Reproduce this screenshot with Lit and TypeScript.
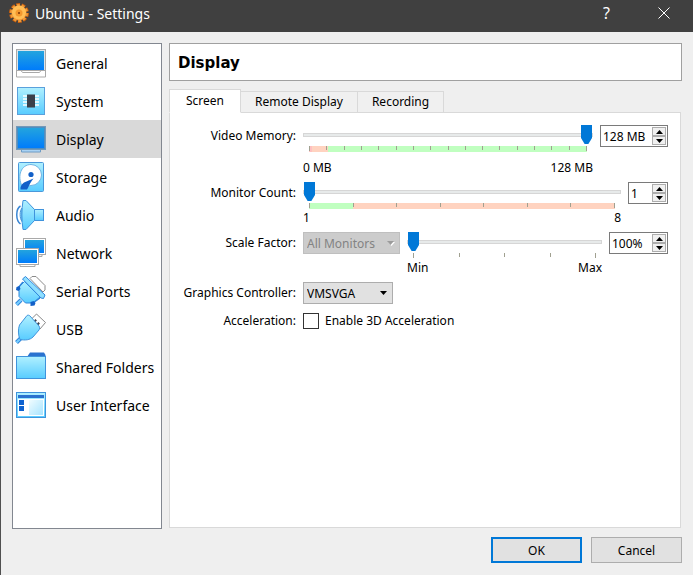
import { LitElement, html, css, svg, nothing } from "lit";
import { customElement, property, state } from "lit/decorators.js";
import { classMap } from "lit/directives/class-map.js";
import { styleMap } from "lit/directives/style-map.js";

const defs = svg`
  <defs>
    <linearGradient id="screen" x1="0" y1="0" x2="0" y2="1">
      <stop offset="0" stop-color="#23a4de" /><stop offset="1" stop-color="#007cfb" />
    </linearGradient>
    <linearGradient id="sky" x1="0" y1="0" x2="0" y2="1">
      <stop offset="0" stop-color="#b0f0ff" /><stop offset="1" stop-color="#58ccff" />
    </linearGradient>
    <linearGradient id="pale" x1="0" y1="0" x2="1" y2="1">
      <stop offset="0" stop-color="#f0fcff" /><stop offset="1" stop-color="#a8e4ff" />
    </linearGradient>
  </defs>`;

const icons = {
  general: svg`
    <path d="M1.500 23.500H6l1.500 2h17l1.500-2h4.500v6.500h-29z" fill="#fff" stroke="#a9a9a9" />
    <rect x="1.500" y="2.500" width="29" height="21" fill="#dce4ea" stroke="#a9a9a9" />
    <rect x="3" y="4" width="26" height="19" fill="url(#screen)" />`,
  system: svg`
    <rect x="2.500" y="2.500" width="27" height="27" fill="url(#sky)" stroke="#5aa0dc" />
    <path d="M8 11h16M8 14h16M8 17h16M8 20h16" stroke="#fff" stroke-width="1.500" />
    <rect x="12" y="9.500" width="8" height="13" fill="#3a3f4b" />`,
  display: svg`
    <path d="M6.500 26v3h19v-3z" fill="#a9d2f3" stroke="#6d9cc6" />
    <rect x="1.500" y="3.500" width="29" height="23" fill="#4f8dc0" stroke="#7299b9" />
    <rect x="3" y="5" width="26" height="20" fill="url(#screen)" />`,
  storage: svg`
    <rect x="3.500" y="1.500" width="25" height="29" rx="1" fill="url(#sky)" stroke="#4a98da" />
    <path d="M7 25C2 15 6 3.500 16 3.500A10.500 10.500 0 0 1 16 24.500C14 24.500 11 26 9 27z" fill="#fff" stroke="#6fb4e4" />
    <path d="M18.500 17.500L9 21.500C6.500 23 5 26 5.500 28.500H12C14 26 14 23 18.500 17.500z" fill="#1260c8" />
    <circle cx="16" cy="13.500" r="2.600" fill="#1260c8" />`,
  audio: svg`
    <path d="M7 9C4.500 12 4.500 19 7 22.500z" fill="#8edbff" stroke="#4a98da" />
    <path d="M5.500 7C.500 10 .500 21 5.500 25" fill="none" stroke="#3a86d4" stroke-width="1.500" />
    <rect x="19.500" y="10.500" width="9" height="11" fill="url(#sky)" stroke="#3f93dc" />
    <path d="M8 1.500h3l8.500 9v11l-8.500 9H8C6.500 21 6.500 11 8 1.500z" fill="url(#sky)" stroke="#3f93dc" />`,
  network: svg`
    <path d="M12 17v2.500h15V17z" fill="#f4f4f4" stroke="#a9a9a9" />
    <rect x="8.500" y="1.500" width="22" height="16" fill="#fff" stroke="#a9a9a9" />
    <rect x="10" y="3" width="19" height="13" fill="url(#screen)" />
    <path d="M5 27v2.500h15V27z" fill="#fff" stroke="#a9a9a9" />
    <rect x="1.500" y="11.500" width="22" height="16" fill="#fff" stroke="#a9a9a9" />
    <rect x="3" y="13" width="19" height="13" fill="url(#screen)" />`,
  serial: svg`
    <path d="M15 3.500L17 1.500H21L30 10.500V15L28 17z" fill="#fff" stroke="#8a8a8a" />
    <path d="M1.500 29.500L6 25" stroke="#2f86dc" stroke-width="4" />
    <path d="M1.500 29.500L6 25" stroke="#78cfff" stroke-width="2" />
    <path d="M9.500 6.500L25 22L18 28H10.500L4 21.500V12z" fill="url(#sky)" stroke="#2f86dc" />
    <path d="M3 13l5-6M18 28l7-5" stroke="#2f86dc" stroke-width="1.500" />
    <path d="M7.500 4L10.500 1.500L30 20L28.500 23.500L26 23z" fill="#8edfff" stroke="#2f86dc" />
    <path d="M1.500 12l3-1 1 3-2 2-2.500-1zM15.500 27l3-1 2 2-1 2.500-4 .500z" fill="#1260c8" />`,
  usb: svg`
    <path d="M16 6.500L21.500 1L30.500 9.500L25 16z" fill="#fff" stroke="#8a8a8a" />
    <path d="M19.500 7l1.500 1.500M22.500 10l1.500 1.500" stroke="#3f444d" stroke-width="2.500" />
    <path d="M1.500 29.500L6 25" stroke="#2f86dc" stroke-width="4" />
    <path d="M1.500 29.500L6 25" stroke="#78cfff" stroke-width="2" />
    <path d="M12 2.500C13 2 14 2 15 3L24 13C25 15 24.500 16 24 17L18 24C15 27 10 27.500 5 26.500C3 22 3 16 4.500 12z" fill="url(#sky)" stroke="#3f93dc" />`,
  folder: svg`
    <path d="M12 6L15 1.500H29L30.500 4V7H12z" fill="#2a72cf" />
    <rect x="1.500" y="5.500" width="29" height="22" fill="url(#sky)" stroke="#3f93dc" />`,
  ui: svg`
    <rect x="1.500" y="3.500" width="29" height="25" fill="url(#sky)" stroke="#3f93dc" />
    <rect x="3" y="6" width="26" height="3" fill="#2a72cf" />
    <rect x="3" y="10" width="26" height="17" fill="#fff" />
    <path d="M4 11h5v5H4zM4 17h5v5H4z" fill="#0f62d0" />
    <rect x="14" y="11" width="14" height="15" fill="url(#pale)" />`,
};

type IconName = keyof typeof icons;

const pages: { icon: IconName; label: string }[] = [
  { icon: "general", label: "General" },
  { icon: "system", label: "System" },
  { icon: "display", label: "Display" },
  { icon: "storage", label: "Storage" },
  { icon: "audio", label: "Audio" },
  { icon: "network", label: "Network" },
  { icon: "serial", label: "Serial Ports" },
  { icon: "usb", label: "USB" },
  { icon: "folder", label: "Shared Folders" },
  { icon: "ui", label: "User Interface" },
];

const uiFont = css`"Noto Sans", "Open Sans", sans-serif`;
const headingFont = css`"DejaVu Sans", sans-serif`;

/** Slider with a tick ruler, coloured ranges and captions at both ends. */
@customElement("range-ruler")
export class RangeRuler extends LitElement {
  @property() label = "";
  @property({ type: Number }) min = 0;
  @property({ type: Number }) max = 100;
  @property({ type: Number }) value = 0;
  @property({ type: Number }) ticks = 2;
  @property() low = "";
  @property() high = "";
  @property() bands = "none";
  @property({ type: Boolean }) spaced = false;

  static styles = css`
    :host { display: block; flex: 1; min-width: 0; }
    .range {
      appearance: none; display: block; width: 100%; height: 20px;
      margin: 0; background: transparent;
    }
    .range::-webkit-slider-runnable-track {
      box-sizing: border-box; height: 4px;
      border: 1px solid #d6d6d6; background: #e7eaea;
    }
    .range::-webkit-slider-thumb {
      appearance: none; width: 11px; height: 19px; margin-top: -9px;
      background: #0078d7;
      clip-path: polygon(0 0, 100% 0, 100% 68%, 67% 100%, 33% 100%, 0 68%);
    }
    .ruler {
      display: flex; justify-content: space-between;
      height: 6px; margin: 1px 6px 0;
    }
    .tick { width: 1px; height: 4px; background: #a0a090; }
    .tick:first-child, .tick:last-child { height: 5px; }
    .captions {
      display: flex; justify-content: space-between; margin-top: 1px;
      font-size: 12px; line-height: 16px;
    }
    .spaced { margin-top: 8px; }
  `;

  render() {
    return html`
      <input class="range" type="range" aria-label=${this.label}
        min=${this.min} max=${this.max} .value=${String(this.value)} />
      <div class="ruler" style=${styleMap({ background: this.bands })}>
        ${Array.from({ length: this.ticks }, () => html`<span class="tick"></span>`)}
      </div>
      <div class=${classMap({ captions: true, spaced: this.spaced })}>
        <span>${this.low}</span><span>${this.high}</span>
      </div>`;
  }
}

/** Text field with a pair of stepper buttons. */
@customElement("spin-box")
export class SpinBox extends LitElement {
  @property() label = "";
  @property() value = "";

  static styles = css`
    :host {
      display: flex; box-sizing: border-box; height: 22px; padding: 1px;
      border: 1px solid #7a7a7a; background: #fff;
    }
    .field {
      flex: 1; min-width: 0; border: 0; padding: 0 0 0 1px; margin: 0;
      background: none; outline: none; color: #000;
      font: 12px ${uiFont};
    }
    .steps { display: flex; flex-direction: column; width: 14px; }
    .step {
      flex: 1; display: flex; align-items: center; justify-content: center;
      min-height: 0; padding: 0; border: 1px solid #adadad; background: #f0f0f0;
    }
    .arrow { display: block; width: 7px; height: 4px; }
  `;

  render() {
    return html`
      <input class="field" type="text" aria-label=${this.label} .value=${this.value} />
      <div class="steps">
        <button class="step" aria-label="Increase">
          <svg class="arrow" viewBox="0 0 7 4"><path d="M0 4L3.500 0L7 4z" /></svg>
        </button>
        <button class="step" aria-label="Decrease">
          <svg class="arrow" viewBox="0 0 7 4"><path d="M0 0L3.500 4L7 0z" /></svg>
        </button>
      </div>`;
  }
}

@customElement("app-root")
export class AppRoot extends LitElement {
  @state() private page = "Display";
  @state() private tab = "Screen";

  static styles = css`
    :host {
      display: flex; flex-direction: column; box-sizing: border-box;
      min-height: 100vh; border-left: 1px solid #505050;
      background: #efefef; color: #000; font: 12px/16px ${uiFont};
    }
    .titlebar {
      display: flex; align-items: center; height: 32px; margin-left: -1px;
      padding: 0 1px 0 9px; background: #404040; color: #fff;
    }
    .gear { width: 20px; height: 20px; margin: -7px 6px 0 0; }
    .title {
      flex: 1; margin: -4px 0 0; font: 14px/20px ${uiFont};
    }
    .caption {
      display: flex; justify-content: center; align-items: center;
      width: 57px; height: 26px; margin-top: -6px; padding: 0;
      border: 0; background: none; color: #fff; font: 16px/20px ${uiFont};
    }
    .cross { width: 12px; height: 12px; }
    .body { flex: 1; display: flex; gap: 7px; padding: 11px 11px 0; }
    .pages {
      box-sizing: border-box; width: 150px; flex: none; margin: 0; padding: 0;
      list-style: none; border: 1px solid #828790; background: #fff;
    }
    .page {
      display: flex; align-items: center; gap: 9px; width: 100%; height: 38px;
      padding: 0 0 0 2px; border: 0; background: none; color: #000;
      text-align: left; white-space: nowrap; font: 14px/20px ${uiFont};
    }
    .page.current { background: #d9d9d9; }
    .text { padding-top: 2px; }
    .icon { width: 32px; height: 32px; flex: none; }
    .main {
      flex: 1; min-width: 0; display: flex; flex-direction: column;
      padding-bottom: 1px;
    }
    .heading {
      box-sizing: border-box; height: 38px; margin: 0 0 8px; padding: 0 8px;
      border: 1px solid #a0a0a0; background: #fff;
      font: bold 15px/38px ${headingFont};
    }
    .tabs { display: flex; align-items: flex-end; height: 24px; margin-bottom: -1px; }
    .tab {
      height: 22px; margin-left: -1px; padding: 0 14px;
      border: 1px solid #d9d9d9; background: #f0f0f0; color: #000;
      font: 12px/20px ${uiFont};
    }
    .tab.current {
      height: 24px; margin-left: 0; padding: 0 16px; z-index: 1;
      border-bottom-color: #fff; background: #fff;
    }
    .panel {
      flex: 1; display: grid; grid-template-columns: 114px 1fr;
      column-gap: 7px; align-content: start; margin-right: 1px;
      padding: 12px; border: 1px solid #d9d9d9; background: #fff;
    }
    .name { text-align: right; line-height: 22px; white-space: nowrap; }
    .control { display: flex; align-items: flex-start; gap: 7px; }
    .tall { height: 57px; }
    .medium { height: 50px; }
    .short { height: 28px; }
    .memory { width: 68px; }
    .count { width: 40px; }
    .percent { width: 59px; }
    .combo { display: grid; align-items: center; }
    .select {
      grid-area: 1 / 1; appearance: none; box-sizing: border-box;
      height: 22px; padding: 0 3px; border: 1px solid #adadad; border-radius: 0;
      background: #e1e1e1; color: #000; font: 12px ${uiFont};
    }
    .select:disabled { border-color: #bfbfbf; background: #ccc; color: #838383; opacity: 1; }
    .monitors { width: 97px; }
    .graphics { width: 90px; }
    .chevron {
      grid-area: 1 / 1; justify-self: end; width: 7px; height: 4px;
      margin-right: 6px; pointer-events: none;
    }
    .dim { fill: #9b9b9b; filter: drop-shadow(1px 1px 0 #fff); }
    .check { display: flex; align-items: center; gap: 6px; height: 22px; }
    .box {
      appearance: none; box-sizing: border-box; width: 16px; height: 16px;
      margin: 0; border: 1px solid #333; background: #fff;
    }
    .box:checked { background: #333; }
    .actions {
      display: flex; justify-content: flex-end; gap: 9px; padding: 8px 11px 12px;
    }
    .action {
      box-sizing: border-box; width: 91px; height: 26px; padding: 0;
      border: 1px solid #adadad; background: #e1e1e1; color: #000;
      font: 12px ${uiFont};
    }
    .action.default { border: 2px solid #0078d7; }
  `;

  private chevron(dim = false) {
    return html`<svg class=${classMap({ chevron: true, dim })} viewBox="0 0 7 4" overflow="visible">
      <path d="M0 0h7L3.500 4z" /></svg>`;
  }

  render() {
    return html`
      <header class="titlebar">
        <svg class="gear" viewBox="0 0 20 20" aria-hidden="true">
          <circle cx="10" cy="10" r="8" fill="none" stroke="#c8600f" stroke-width="4"
            pathLength="100" stroke-dasharray="7 3" />
          <circle cx="10" cy="10" r="7.500" fill="#f09030" stroke="#f09a38"
            stroke-width="3" pathLength="100" stroke-dasharray="6 4" stroke-dashoffset="-.500" />
          <circle cx="10" cy="9.500" r="7" fill="#ffbe55" />
          <circle cx="10" cy="10" r="3.500" fill="#f3982e" />
          <circle cx="10" cy="10" r="1" fill="#7a3206" />
        </svg>
        <h1 class="title">Ubuntu - Settings</h1>
        <button class="caption" aria-label="Help">?</button>
        <button class="caption" aria-label="Close">
          <svg class="cross" viewBox="0 0 12 12"><path d="M.5 .5l11 11M11.500 .5l-11 11" stroke="#fff" /></svg>
        </button>
      </header>

      <div class="body">
        <ul class="pages">
          ${pages.map(({ icon, label }) => html`
            <li>
              <button class=${classMap({ page: true, current: label === this.page })}
                @click=${() => (this.page = label)}>
                <svg class="icon" viewBox="0 0 32 32" aria-hidden="true">${defs}${icons[icon]}</svg>
                <span class="text">${label}</span>
              </button>
            </li>`)}
        </ul>

        <main class="main">
          <h2 class="heading">${this.page}</h2>
          <div class="tabs" role="tablist">
            ${["Screen", "Remote Display", "Recording"].map((name) => html`
              <button role="tab" class=${classMap({ tab: true, current: name === this.tab })}
                aria-selected=${name === this.tab ? "true" : "false"}
                @click=${() => (this.tab = name)}>${name}</button>`)}
          </div>
          <div class="panel">${this.page === "Display" && this.tab === "Screen" ? this.screenForm() : nothing}</div>
        </main>
      </div>

      <footer class="actions">
        <button class="action default">OK</button>
        <button class="action">Cancel</button>
      </footer>`;
  }

  private screenForm() {
    return html`
      <span class="name">Video Memory:</span>
      <div class="control tall">
        <range-ruler label="Video Memory" max="128" value="128" ticks="17" spaced
          low="0 MB" high="128 MB"
          bands="linear-gradient(90deg, #ffc0c0 1%, #ffd3c0 1% 7%, #c0ffc0 7%)"></range-ruler>
        <spin-box class="memory" label="Video Memory" value="128 MB"></spin-box>
      </div>

      <span class="name">Monitor Count:</span>
      <div class="control medium">
        <range-ruler label="Monitor Count" min="1" max="8" value="1" ticks="8"
          low="1" high="8"
          bands="linear-gradient(90deg, #c0ffc0 14.3%, #ffd3c0 14.3%)"></range-ruler>
        <spin-box class="count" label="Monitor Count" value="1"></spin-box>
      </div>

      <label class="name" for="monitors">Scale Factor:</label>
      <div class="control medium">
        <div class="combo">
          <select class="select monitors" id="monitors" disabled><option>All Monitors</option></select>
          ${this.chevron(true)}
        </div>
        <range-ruler label="Scale Factor" min="100" max="200" value="100" ticks="5"
          low="Min" high="Max"></range-ruler>
        <spin-box class="percent" label="Scale Factor" value="100%"></spin-box>
      </div>

      <label class="name" for="graphics">Graphics Controller:</label>
      <div class="control short">
        <div class="combo">
          <select class="select graphics" id="graphics"><option>VMSVGA</option></select>
          ${this.chevron()}
        </div>
      </div>

      <span class="name">Acceleration:</span>
      <label class="check"><input class="box" type="checkbox" />Enable 3D Acceleration</label>`;
  }
}
